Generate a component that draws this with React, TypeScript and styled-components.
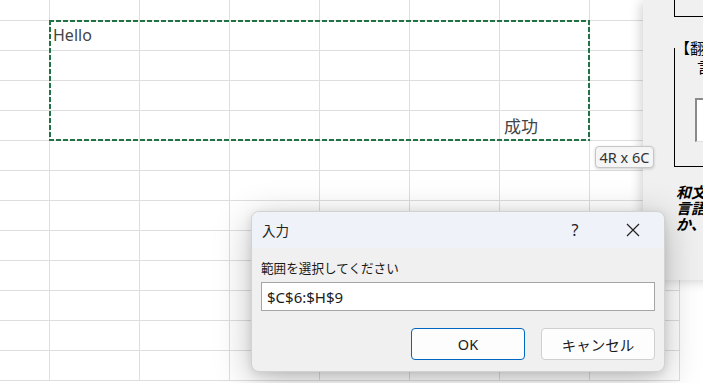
import styled, { createGlobalStyle } from "styled-components";

const GlobalStyle = createGlobalStyle`
  html, body {
    margin: 0;
    padding: 0;
    overflow: hidden;
    background: #ffffff;
  }
  body {
    font-family: "Noto Sans", "Noto Sans CJK JP", sans-serif;
  }
`;

const ROW_COUNT = 13;
const COL_COUNT = 8;

interface CellText {
  row: number;
  col: number;
  text: string;
  variant: "top" | "bottom";
}

const cellTexts: CellText[] = [
  { row: 1, col: 1, text: "Hello", variant: "top" },
  { row: 4, col: 6, text: "成功", variant: "bottom" },
];

const App = () => {
  const cells = [];
  for (let r = 0; r < ROW_COUNT; r++) {
    for (let c = 0; c < COL_COUNT; c++) {
      const found = cellTexts.find((t) => t.row === r && t.col === c);
      cells.push(
        <Cell key={`${r}-${c}`} $variant={found ? found.variant : "top"}>
          {found ? found.text : null}
        </Cell>,
      );
    }
  }

  return (
    <>
      <GlobalStyle />
      <Screen>
        <Sheet>{cells}</Sheet>
        <Marquee />

        <SidePanel>
          <TopBox />
          <Group>
            <Legend>【翻訳設定】</Legend>
            <GroupLabel>言語の選択</GroupLabel>
            <GroupInput />
          </Group>
          <Note>
            <span>和文を英訳します。</span>
            <span>言語を選択してください</span>
            <span>か、</span>
          </Note>
        </SidePanel>

        <SizeTip>4R x 6C</SizeTip>

        <Dialog>
          <TitleBar>
            <TitleText>入力</TitleText>
            <TitleButtons>
              <TitleBtn>?</TitleBtn>
              <TitleBtn>
                <svg width="14" height="14" viewBox="0 0 14 14">
                  <path
                    d="M1 1 L13 13 M13 1 L1 13"
                    stroke="#222"
                    strokeWidth="1.2"
                    fill="none"
                  />
                </svg>
              </TitleBtn>
            </TitleButtons>
          </TitleBar>
          <DialogBody>
            <Prompt>範囲を選択してください</Prompt>
            <RangeInput>$C$6:$H$9</RangeInput>
            <ButtonRow>
              <DlgButton $primary>OK</DlgButton>
              <DlgButton>キャンセル</DlgButton>
            </ButtonRow>
          </DialogBody>
        </Dialog>
      </Screen>
    </>
  );
};

const Screen = styled.div`
  position: relative;
  width: 703px;
  height: 383px;
  overflow: hidden;
  background: #ffffff;
`;

const Sheet = styled.div`
  display: grid;
  grid-template-columns: 50px repeat(7, 90px);
  grid-template-rows: 21px repeat(12, 30px);
`;

const Cell = styled.div<{ $variant: "top" | "bottom" }>`
  box-sizing: border-box;
  border-right: 1px solid #dedede;
  border-bottom: 1px solid #dedede;
  display: flex;
  align-items: ${(p) => (p.$variant === "top" ? "flex-start" : "flex-end")};
  padding: ${(p) => (p.$variant === "top" ? "4px 0 0 3px" : "0 0 3px 4px")};
  font-family: "Noto Sans", "Noto Sans CJK JP", sans-serif;
  font-size: ${(p) => (p.$variant === "top" ? "16px" : "17px")};
  line-height: 20px;
  color: #444444;
  white-space: nowrap;
`;

const dash = "#217346";

const Marquee = styled.div`
  position: absolute;
  left: 49px;
  top: 20px;
  width: 541px;
  height: 121px;
  box-sizing: border-box;
  pointer-events: none;
  background-image:
    repeating-linear-gradient(90deg, ${dash} 0 5px, transparent 5px 7px),
    repeating-linear-gradient(90deg, ${dash} 0 5px, transparent 5px 7px),
    repeating-linear-gradient(180deg, ${dash} 0 5px, transparent 5px 7px),
    repeating-linear-gradient(180deg, ${dash} 0 5px, transparent 5px 7px);
  background-size:
    100% 2px,
    100% 2px,
    2px 100%,
    2px 100%;
  background-position:
    0 0,
    0 100%,
    0 0,
    100% 0;
  background-repeat: no-repeat;
`;

const SizeTip = styled.div`
  position: absolute;
  left: 595px;
  top: 146px;
  width: 59px;
  height: 22px;
  box-sizing: border-box;
  border: 1px solid #c6c6c6;
  border-radius: 4px;
  background: #f5f5f5;
  box-shadow: 0 1px 3px rgba(0, 0, 0, 0.18);
  display: flex;
  align-items: center;
  justify-content: center;
  font-family: "Noto Sans", sans-serif;
  font-size: 14.5px;
  color: #333333;
  white-space: nowrap;
`;

const SidePanel = styled.div`
  position: absolute;
  left: 643px;
  top: 0;
  width: 160px;
  height: 280px;
  background: #f0f0f0;
  box-shadow: -3px 2px 10px rgba(0, 0, 0, 0.16);
  display: flex;
  flex-direction: column;
  font-family: "Noto Sans CJK JP", sans-serif;
`;

const TopBox = styled.div`
  margin-left: 31px;
  height: 16px;
  border-left: 1px solid #000;
  border-bottom: 1px solid #000;
  background: #f0f0f0;
`;

const Group = styled.fieldset`
  margin: 22px 0 0 31px;
  padding: 0;
  height: 128px;
  box-sizing: border-box;
  border: 1px solid #000;
  min-width: 0;
`;

const Legend = styled.legend`
  margin-left: 0;
  padding: 0;
  font-size: 15px;
  line-height: 18px;
  color: #000;
  white-space: nowrap;
`;

const GroupLabel = styled.div`
  margin: 1px 0 0 22px;
  font-size: 15px;
  line-height: 18px;
  color: #000;
  white-space: nowrap;
`;

const GroupInput = styled.div`
  margin: 22px 0 0 20px;
  height: 44px;
  box-sizing: border-box;
  border-top: 2px solid #8a8a8a;
  border-left: 2px solid #8a8a8a;
  border-bottom: 1px solid #e0e0e0;
  background: #ffffff;
`;

const Note = styled.div`
  margin: 17px 0 0 33px;
  display: flex;
  flex-direction: column;
  font-size: 15px;
  line-height: 16px;
  font-weight: 700;
  font-style: italic;
  color: #000;
  white-space: nowrap;
`;

const Dialog = styled.div`
  position: absolute;
  left: 251px;
  top: 211px;
  width: 414px;
  height: 161px;
  box-sizing: border-box;
  border: 1px solid #d2d2d2;
  border-radius: 8px;
  overflow: hidden;
  background: #f0f0f0;
  box-shadow:
    0 8px 36px rgba(0, 0, 0, 0.26),
    0 2px 8px rgba(0, 0, 0, 0.1);
  display: flex;
  flex-direction: column;
  font-family: "Noto Sans CJK JP", "Noto Sans", sans-serif;
`;

const TitleBar = styled.div`
  height: 36px;
  flex-shrink: 0;
  background: #eff2f8;
  display: flex;
  align-items: center;
  justify-content: space-between;
  padding-left: 10px;
`;

const TitleText = styled.span`
  font-size: 13.5px;
  color: #222;
`;

const TitleButtons = styled.div`
  display: flex;
  height: 100%;
  margin-right: 8px;
`;

const TitleBtn = styled.div`
  width: 46px;
  height: 100%;
  display: flex;
  align-items: center;
  justify-content: center;
  font-family: "Noto Sans", sans-serif;
  font-size: 16px;
  color: #222;
  &:first-child {
    margin-right: 12px;
  }
`;

const DialogBody = styled.div`
  flex: 1;
  display: flex;
  flex-direction: column;
  padding: 11px 9px 0 9px;
`;

const Prompt = styled.div`
  font-size: 12.6px;
  line-height: 18px;
  color: #1a1a1a;
  white-space: nowrap;
`;

const RangeInput = styled.div`
  margin-top: 5px;
  height: 29px;
  box-sizing: border-box;
  border: 1px solid #a5a5a5;
  background: #ffffff;
  display: flex;
  align-items: center;
  padding-left: 5px;
  font-family: "Noto Sans", sans-serif;
  font-size: 15px;
  color: #1a1a1a;
`;

const ButtonRow = styled.div`
  margin-top: 17px;
  display: flex;
  justify-content: flex-end;
  gap: 16px;
`;

const DlgButton = styled.div<{ $primary?: boolean }>`
  width: 114px;
  height: 32px;
  box-sizing: border-box;
  border: 1px solid ${(p) => (p.$primary ? "#0067c0" : "#d0d0d0")};
  border-radius: 4px;
  background: #fdfdfd;
  display: flex;
  align-items: center;
  justify-content: center;
  font-family: "Noto Sans", "Noto Sans CJK JP", sans-serif;
  font-size: 14.5px;
  color: #1a1a1a;
`;

export default App;
